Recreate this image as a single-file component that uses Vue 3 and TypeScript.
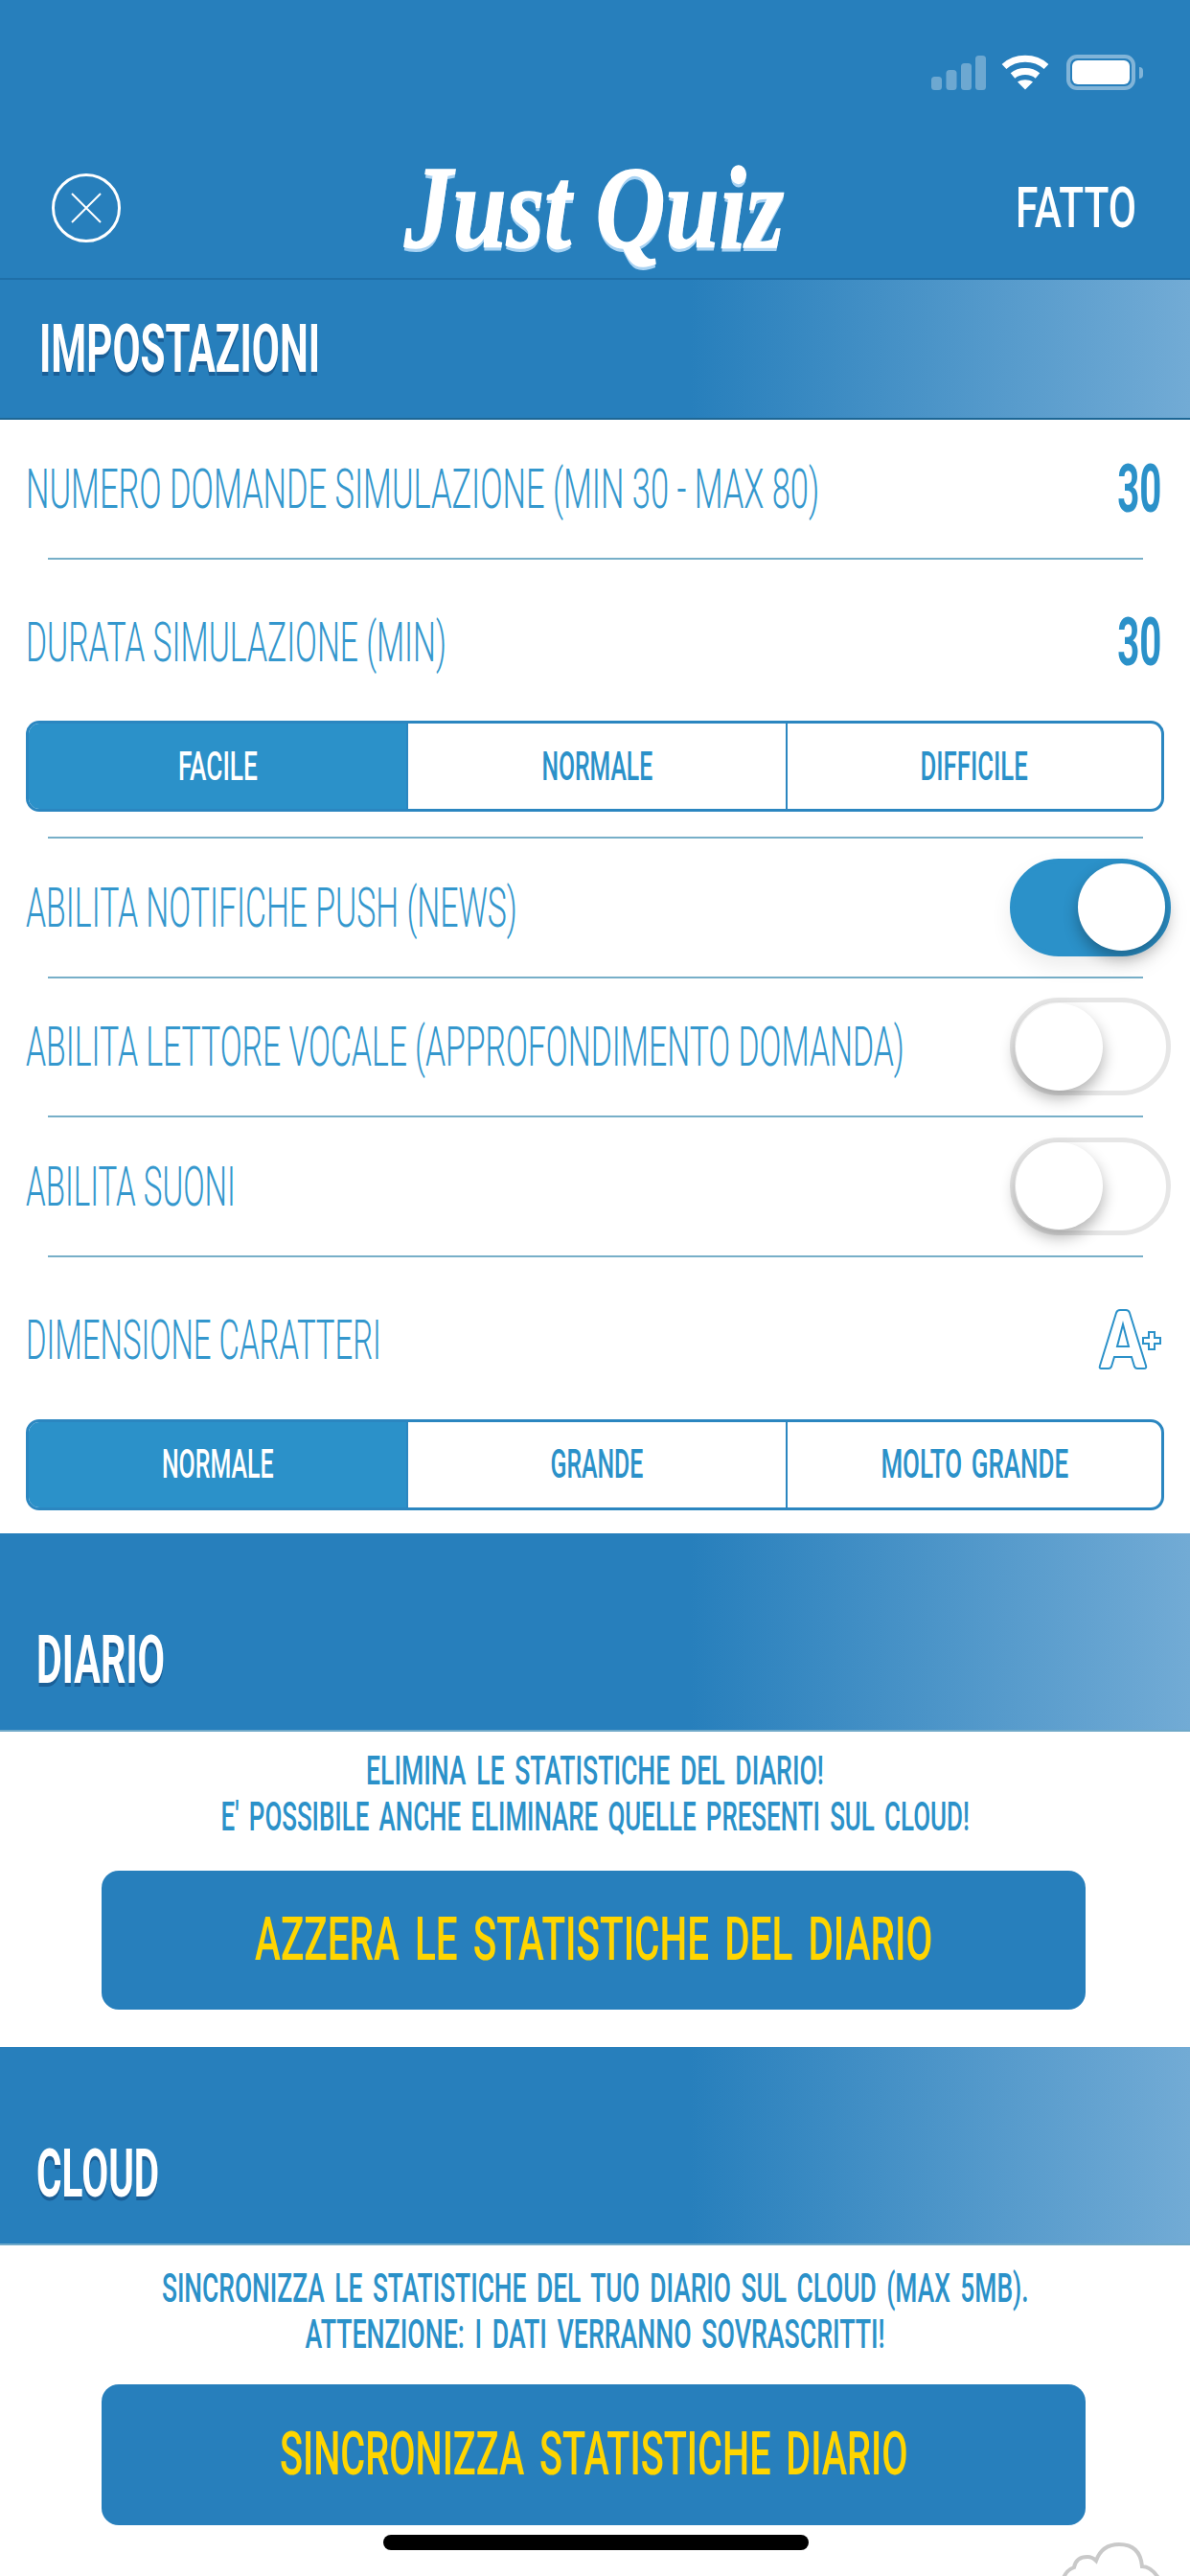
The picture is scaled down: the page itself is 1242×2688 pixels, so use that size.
<script setup lang="ts">
import type { Directive } from 'vue'

// Squeezes a wide sans label horizontally to the condensed width of the design.
const vFit: Directive<HTMLElement, number> = {
  mounted(el, binding) {
    el.style.transform = `scaleX(${binding.value / el.offsetWidth})`
  },
}

const toggles = [
  { label: 'ABILITA NOTIFICHE PUSH (NEWS)', width: 513, on: true },
  { label: 'ABILITA LETTORE VOCALE (APPROFONDIMENTO DOMANDA)', width: 917, on: false },
  { label: 'ABILITA SUONI', width: 219, on: false },
]
const level = [
  { label: 'FACILE', width: 83, on: true },
  { label: 'NORMALE', width: 116, on: false },
  { label: 'DIFFICILE', width: 112, on: false },
]
const size = [
  { label: 'NORMALE', width: 117, on: true },
  { label: 'GRANDE', width: 97, on: false },
  { label: 'MOLTO GRANDE', width: 196, on: false },
]
</script>

<template>
  <div class="screen">
    <header class="top">
      <div class="status">
        <svg class="signal" width="57" height="36" viewBox="0 0 57 36" fill="#fff" opacity=".32">
          <rect x="0" y="22" width="11" height="14" rx="3.5" />
          <rect x="15.5" y="15" width="11" height="21" rx="3.5" />
          <rect x="31" y="8" width="11" height="28" rx="3.5" />
          <rect x="46" y="0" width="11" height="36" rx="3.5" />
        </svg>
        <svg class="wifi" width="50" height="37" viewBox="0 0 50 37" fill="none" stroke="#fff" stroke-width="7">
          <path d="M3 12.5C15 1.5 35 1.5 47 12.5" />
          <path d="M12 22C19 16 31 16 38 22" />
          <path d="M25 36.5L17 28.5C21.5 25.5 28.5 25.5 33 28.5Z" fill="#fff" stroke="none" />
        </svg>
        <div class="battery"><div class="charge"></div></div>
        <div class="nub"></div>
      </div>
      <div class="nav">
        <svg class="close" width="72" height="72" viewBox="0 0 72 72" fill="none" stroke="#fff">
          <circle cx="36" cy="36" r="34.5" stroke-width="3" />
          <path d="M21 21L51 51M51 21L21 51" stroke-width="2" />
        </svg>
        <div class="logo"><span v-fit="396" class="fit logo-text">Just Quiz</span></div>
        <div class="done"><span v-fit="126" class="fit done-text">FATTO</span></div>
      </div>
    </header>

    <section class="bar bar-first">
      <span v-fit="293" class="fit bar-title">IMPOSTAZIONI</span>
    </section>

    <div class="row row-first">
      <div class="label-box"><span v-fit="828" class="fit label">NUMERO DOMANDE SIMULAZIONE (MIN 30 - MAX 80)</span></div>
      <span v-fit="46" class="fit-right value">30</span>
    </div>
    <div class="rule"></div>
    <div class="row row-tall">
      <div class="label-box"><span v-fit="439" class="fit label">DURATA SIMULAZIONE (MIN)</span></div>
      <span v-fit="46" class="fit-right value">30</span>
    </div>

    <div class="segments">
      <div v-for="item in level" :key="item.label" class="segment" :class="{ active: item.on }">
        <span v-fit="item.width" class="fit-center seg-text">{{ item.label }}</span>
      </div>
    </div>
    <div class="rule rule-after-seg"></div>

    <template v-for="item in toggles" :key="item.label">
      <div class="row row-toggle">
        <div class="label-box"><span v-fit="item.width" class="fit label">{{ item.label }}</span></div>
        <div class="toggle" :class="{ on: item.on }"><div class="knob"></div></div>
      </div>
      <div class="rule"></div>
    </template>

    <div class="row row-size">
      <div class="label-box"><span v-fit="371" class="fit label">DIMENSIONE CARATTERI</span></div>
      <svg width="68" height="64" viewBox="0 0 68 64" fill="none" stroke="#2b91c9" stroke-width="2">
        <path d="M3 62Q1 62 2 59L19 4Q20 1 23 1H29Q32 1 33 4L50 59Q51 62 48 62H41Q39 62 38 60L35 50H17L14 60Q13 62 11 62Z" />
        <path d="M20 39H32L26 16Z" />
        <path d="M53 24h6v6h6v6h-6v6h-6v-6h-6v-6h6z" fill="#fff" />
      </svg>
    </div>
    <div class="segments">
      <div v-for="item in size" :key="item.label" class="segment" :class="{ active: item.on }">
        <span v-fit="item.width" class="fit-center seg-text">{{ item.label }}</span>
      </div>
    </div>

    <section class="bar bar-diary">
      <span v-fit="134" class="fit bar-title">DIARIO</span>
    </section>
    <div class="note note-diary">
      <div class="note-line"><span v-fit="478" class="fit-center note-text">ELIMINA LE STATISTICHE DEL DIARIO!</span></div>
      <div class="note-line"><span v-fit="781" class="fit-center note-text">E' POSSIBILE ANCHE ELIMINARE QUELLE PRESENTI SUL CLOUD!</span></div>
    </div>
    <div class="action action-diary">
      <span v-fit="707" class="fit-center action-text">AZZERA LE STATISTICHE DEL DIARIO</span>
    </div>

    <section class="bar bar-cloud">
      <span v-fit="128" class="fit bar-title">CLOUD</span>
    </section>
    <div class="note note-cloud">
      <div class="note-line"><span v-fit="905" class="fit-center note-text">SINCRONIZZA LE STATISTICHE DEL TUO DIARIO SUL CLOUD (MAX 5MB).</span></div>
      <div class="note-line"><span v-fit="605" class="fit-center note-text">ATTENZIONE: I DATI VERRANNO SOVRASCRITTI!</span></div>
    </div>
    <div class="action action-cloud">
      <span v-fit="656" class="fit-center action-text">SINCRONIZZA STATISTICHE DIARIO</span>
    </div>

    <svg class="cloud" width="110" height="38" viewBox="0 0 110 38" fill="none" stroke="#c9c9c9" stroke-width="4">
      <path d="M5 40Q8 32 16 29Q18 18 30 18Q35 18 39 22Q45 5 63 5Q85 5 87 28Q96 28 104 40" />
    </svg>
    <div class="home"></div>
  </div>
</template>

<style scoped>
.screen {
  position: relative;
  width: 1242px;
  height: 2688px;
  overflow: hidden;
  background: #fff;
  font-family: Roboto, "Liberation Sans", sans-serif;
  color: #2b91c9;
}
.fit, .fit-center, .fit-right {
  display: inline-block;
  flex: none;
  white-space: nowrap;
}
.fit { transform-origin: left center; }
.fit-center { transform-origin: center center; }
.fit-right { transform-origin: right center; }

.top {
  height: 292px;
  box-sizing: border-box;
  background: #277fbc;
  border-bottom: 2px solid #1f6fa8;
}
.status {
  display: flex;
  align-items: flex-end;
  justify-content: flex-end;
  height: 94px;
  box-sizing: border-box;
  padding: 57px 49px 0 0;
}
.signal { margin-right: 16px; }
.wifi { margin-right: 18px; }
.battery {
  width: 72px;
  height: 37px;
  box-sizing: border-box;
  padding: 2px;
  border: 4px solid rgba(255, 255, 255, 0.42);
  border-radius: 11px;
}
.charge {
  height: 100%;
  background: #fff;
  border-radius: 6px;
}
.nub {
  width: 4px;
  height: 12px;
  margin: 0 0 12px 4px;
  border-radius: 0 4px 4px 0;
  background: rgba(255, 255, 255, 0.42);
}
.nav {
  display: grid;
  grid-template-columns: 1fr auto 1fr;
  align-items: center;
  height: 196px;
  box-sizing: border-box;
  padding: 50px 56px 0 54px;
}
.logo {
  width: 396px;
  text-align: left;
}
.logo-text {
  font-family: "Liberation Serif", serif;
  font-style: italic;
  font-weight: 700;
  font-size: 122px;
  line-height: 120px;
  color: #fff;
  -webkit-text-stroke: 1.5px #fff;
  text-shadow: 0 4px 0 #a9d3f3;
}
.done {
  justify-self: end;
  width: 126px;
}
.done-text {
  font-size: 60px;
  line-height: 60px;
  font-weight: 500;
  color: #fff;
}

.bar {
  display: flex;
  align-items: center;
  box-sizing: border-box;
  height: 207px;
  padding: 60px 0 0 38px;
  background: linear-gradient(90deg, #277fbc 0%, #277fbc 58%, #72abd5 100%);
  border-bottom: 2px solid #6fa9c9;
}
.bar-first {
  height: 146px;
  padding: 0 0 0 41px;
  border-bottom-color: #1e6795;
}
.bar-title {
  font-size: 70px;
  line-height: 70px;
  font-weight: 700;
  color: #fff;
  text-shadow: 0 4px 0 #1a5f97;
}

.row {
  display: flex;
  align-items: center;
  justify-content: space-between;
  box-sizing: border-box;
  padding: 0 30px 0 27px;
}
.row-first { height: 144px; }
.row-tall { height: 168px; padding-top: 3px; }
.row-toggle { height: 143.5px; padding-right: 20px; }
.row-size { height: 169px; padding-top: 4px; padding-right: 28px; }
.label-box {
  flex: 1;
  min-width: 0;
  display: flex;
  align-items: center;
}
.label {
  font-size: 58px;
  line-height: 60px;
  font-weight: 300;
  color: #3497cd;
}
.value {
  font-size: 70px;
  line-height: 70px;
  font-weight: 700;
}
.rule {
  height: 2px;
  margin: 0 49px 0 50px;
  background: #77afc8;
  flex: none;
}
.rule-after-seg { margin-top: 26px; }

.segments {
  display: grid;
  grid-template-columns: 394px 396px 1fr;
  height: 95px;
  margin: 0 27px;
  box-sizing: border-box;
  overflow: hidden;
  border: 3px solid #2b86c0;
  border-radius: 14px;
}
.segment {
  display: flex;
  align-items: center;
  justify-content: center;
  overflow: hidden;
  border-left: 2px solid #2b86c0;
}
.segment:first-child { border-left: 0; }
.segment.active {
  background: #2b91c9;
  color: #fff;
}
.seg-text {
  font-size: 42px;
  line-height: 44px;
  font-weight: 500;
  word-spacing: 0.12em;
}

.toggle {
  display: flex;
  flex: none;
  align-items: center;
  width: 168px;
  height: 102px;
  box-sizing: border-box;
  padding: 0 1px;
  background: #fff;
  border: 5px solid #e6e6e6;
  border-radius: 51px;
}
.toggle.on {
  justify-content: flex-end;
  background: #2b91c9;
  border-color: #2b91c9;
  box-shadow: 0 10px 22px rgba(0, 0, 0, 0.08);
}
.knob {
  width: 91px;
  height: 91px;
  border-radius: 50%;
  background: #fff;
  box-shadow: 0 8px 16px rgba(0, 0, 0, 0.3);
}

.bar-diary { margin-top: 24px; }
.bar-cloud { margin-top: 39px; }
.note-diary { padding-top: 18px; }
.note-cloud { padding-top: 22px; }
.note-line {
  display: flex;
  justify-content: center;
  height: 47.5px;
  align-items: center;
}
.note-text {
  font-size: 42px;
  line-height: 44px;
  font-weight: 500;
  word-spacing: 0.15em;
}
.action {
  display: flex;
  align-items: center;
  justify-content: center;
  overflow: hidden;
  margin: 0 109px 0 106px;
  background: #277fbc;
  border-radius: 18px;
  color: #ffd500;
}
.action-diary { height: 145px; margin-top: 32px; }
.action-cloud { height: 147px; margin-top: 28px; }
.action-text {
  font-size: 63px;
  line-height: 66px;
  font-weight: 500;
  word-spacing: 0.15em;
}

.cloud {
  position: absolute;
  left: 1105px;
  top: 2650px;
}
.home {
  position: absolute;
  left: 400px;
  top: 2645px;
  width: 444px;
  height: 16px;
  border-radius: 8px;
  background: #000;
}
</style>
